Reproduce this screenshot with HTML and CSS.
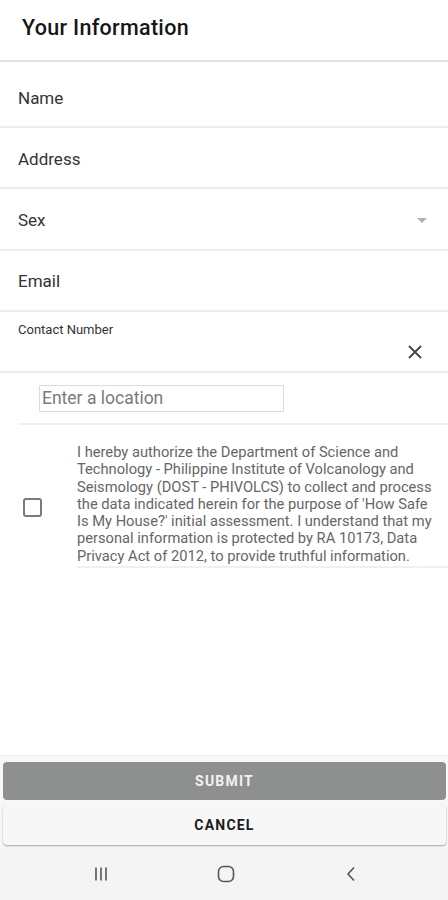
FILE: index.html
```html
<!DOCTYPE html>
<html lang="en">

<head>
    <meta charset="UTF-8">
    <meta name="viewport" content="width=device-width, initial-scale=1.0">
    <title>Your Information</title>
    <link rel="stylesheet" href="styles.css">
</head>

<body>
    <div id="screen">
        <div id="header">
            <h1>Your Information</h1>
        </div>
        <div id="form">
            <div class="row"><span class="label">Name</span></div>
            <div class="row"><span class="label">Address</span></div>
            <div class="row">
                <span class="label">Sex</span>
                <span class="caret"></span>
            </div>
            <div class="row"><span class="label">Email</span></div>
            <div class="row contact">
                <span class="small-label">Contact Number</span>
                <svg class="clear" width="14" height="14" viewBox="0 0 14 14">
                    <path d="M1 1L13 13M13 1L1 13" stroke="#444" stroke-width="1.8" fill="none"/>
                </svg>
            </div>
            <div class="row location">
                <div class="loc-input">Enter a location</div>
            </div>
            <div class="consent">
                <div class="check-col"><span class="checkbox"></span></div>
                <p>I hereby authorize the Department of Science and Technology - Philippine Institute of Volcanology and Seismology (DOST - PHIVOLCS) to collect and process the data indicated herein for the purpose of 'How Safe Is My House?' initial assessment. I understand that my personal information is protected by RA 10173, Data Privacy Act of 2012, to provide truthful information.</p>
            </div>
        </div>
        <div id="actions">
            <div class="btn submit">SUBMIT</div>
            <div class="btn cancel">CANCEL</div>
        </div>
        <div id="navbar">
            <svg width="16" height="16" viewBox="0 0 16 16">
                <path d="M3 1.5V14.5M8 1.5V14.5M13 1.5V14.5" stroke="#555" stroke-width="1.6" fill="none"/>
            </svg>
            <svg width="18" height="18" viewBox="0 0 18 18">
                <rect x="1.5" y="1.5" width="15" height="15" rx="5" stroke="#555" stroke-width="1.6" fill="none"/>
            </svg>
            <svg width="16" height="16" viewBox="0 0 16 16">
                <path d="M11 1.5L5 8L11 14.5" stroke="#555" stroke-width="1.6" fill="none"/>
            </svg>
        </div>
    </div>
</body>

</html>
```

FILE: styles.css
```css
body {
    margin: 0;
    font-family: Roboto, "Liberation Sans", Arial, sans-serif;
    color: #333;
    background: #fff;
}

#screen {
    width: 448px;
    height: 900px;
    display: flex;
    flex-direction: column;
}

#header {
    height: 62px;
    display: flex;
    align-items: center;
    padding-left: 22px;
    border-bottom: 2px solid #e2e2e2;
    box-sizing: border-box;
    flex-shrink: 0;
}

#header h1 {
    margin: 0 0 5px;
    font-size: 21.5px;
    font-weight: 500;
    color: #161616;
    letter-spacing: 0.3px;
}

#form {
    flex: 1;
    padding-top: 5px;
}

.row {
    height: 61.2px;
    display: flex;
    align-items: center;
    justify-content: space-between;
    padding: 0 20px 0 18px;
    border-bottom: 2px solid #ededed;
    box-sizing: border-box;
}

.label {
    font-size: 17px;
    color: #333;
    margin-top: 2px;
}

.caret {
    width: 0;
    height: 0;
    border-left: 5px solid transparent;
    border-right: 5px solid transparent;
    border-top: 5px solid #b0b0b0;
    margin-right: 1px;
    margin-top: 3px;
}

.contact {
    align-items: flex-start;
    flex-direction: column;
    justify-content: flex-start;
}

.small-label {
    font-size: 13px;
    color: #333;
    margin-top: 10px;
}

.contact .clear {
    align-self: flex-end;
    margin-top: 8px;
    margin-right: 6px;
}

.location {
    height: 52px;
    border-bottom: none;
    padding-left: 39px;
    position: relative;
}

.location:after {
    content: "";
    position: absolute;
    left: 18px;
    right: 0;
    bottom: 0;
    height: 2px;
    background: #f0f0f0;
}

.loc-input {
    width: 245px;
    height: 27px;
    border: 1px solid #dcdcdc;
    box-sizing: border-box;
    font-size: 17.5px;
    color: #7a7a7a;
    line-height: 24px;
    padding-left: 2px;
    margin-top: -1px;
}

.consent {
    display: flex;
    align-items: center;
    padding-top: 19px;
}

.check-col {
    width: 77px;
    display: flex;
    padding-left: 23px;
    box-sizing: border-box;
}

.checkbox {
    width: 19px;
    height: 19px;
    border: 2px solid #7a7a7a;
    border-radius: 3px;
    box-sizing: border-box;
    margin-top: 4px;
}

.consent p {
    flex: 1;
    margin: 0;
    padding-right: 13px;
    font-size: 14.7px;
    line-height: 17.3px;
    color: #666;
    border-bottom: 2px solid #f0f0f0;
    padding-bottom: 1px;
}

#actions {
    background: #f8f8f8;
    border-top: 1px solid #f0f0f0;
    padding: 6px 2px 3px 3px;
    display: flex;
    flex-direction: column;
    gap: 5px;
}

.btn {
    display: flex;
    align-items: center;
    justify-content: center;
    font-size: 14px;
    font-weight: 700;
    letter-spacing: 1.2px;
    border-radius: 4px;
}

.submit {
    height: 38px;
    background: #8e8f8f;
    color: #f2f2f2;
}

.cancel {
    height: 40px;
    background: #f7f7f8;
    color: #1c1c1c;
    box-shadow: 0 1px 2px rgba(0, 0, 0, 0.35);
}

#navbar {
    height: 52px;
    background: #f4f4f4;
    display: flex;
    align-items: center;
    justify-content: space-between;
    padding: 0 89px 0 93px;
    flex-shrink: 0;
}
```
